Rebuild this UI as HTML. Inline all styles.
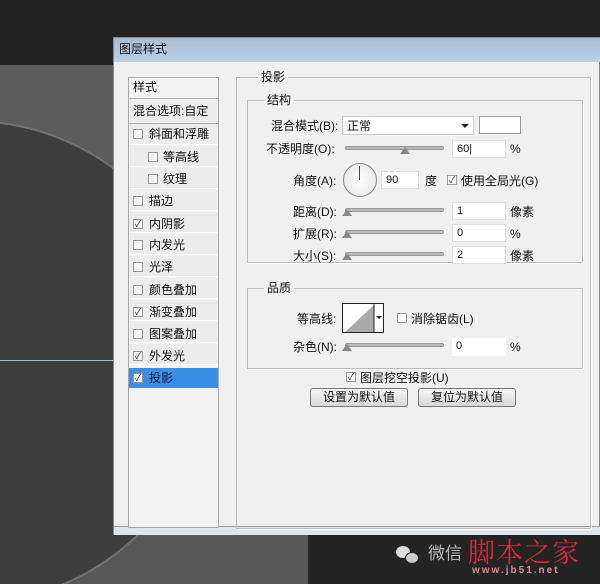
<!DOCTYPE html>
<html><head><meta charset="utf-8"><style>
*{margin:0;padding:0;box-sizing:border-box}
body{width:600px;height:584px;overflow:hidden;background:#242424;position:relative;font-family:"Liberation Sans","Noto Sans CJK SC",sans-serif;font-size:12px;color:#111}
.a{position:absolute}
.t{position:absolute;white-space:nowrap;line-height:14px}
.cb{position:absolute;width:10px;height:10px;border:1px solid #9a9a9a;background:#f4f4f4;font-size:9px;line-height:8px;text-align:center;color:#333}
.inp{position:absolute;height:18px;background:#fff;border:1px solid #ddd;padding-left:4px;line-height:16px;font-size:11px}
.sl{position:absolute;height:4px;background:#b8b8b8;border:1px solid #999;border-radius:2px}
.th{position:absolute;width:0;height:0;border-left:5px solid transparent;border-right:5px solid transparent;border-bottom:7px solid #888}
.btn{position:absolute;height:19px;border:1px solid #777;border-radius:3px;background:linear-gradient(#f6f6f6,#d8d8d8);text-align:center;line-height:17px}
.li{position:absolute;left:129px;width:89px;height:21px;border-bottom:1px solid #fff;background:#ececec}
</style></head><body>
<div class="a" style="left:0;top:65px;width:113px;height:470px;background:#5c5c5c;overflow:hidden">
 <div class="a" style="left:-272px;top:55px;width:484px;height:484px;border-radius:50%;background:#3e3e3e;border:2px solid #727272"></div>
 <div class="a" style="left:0;top:295px;width:113px;height:1px;background:#8fc3d0"></div>
</div>
<div class="a" style="left:0;top:535px;width:308px;height:49px;background:#585858;overflow:hidden">
 <div class="a" style="left:-272px;top:-415px;width:484px;height:484px;border-radius:50%;background:#3e3e3e;border:2px solid #727272"></div>
</div>
<div class="a" style="left:113px;top:37px;width:487px;height:498px;background:#f0f0f0;border:1px solid #888"></div>
<div class="a" style="left:114px;top:38px;width:486px;height:24px;background:linear-gradient(#a8bdd5,#bad0e7)"></div>
<div class="t" style="left:119px;top:42px;font-size:12px">图层样式</div>
<div class="a" style="left:114px;top:526px;width:486px;height:9px;background:#dde6ee;border-top:1px solid #999"></div>
<div class="a" style="left:128px;top:77px;width:91px;height:451px;background:#f2f2f2;border:1px solid #a8a8a8"></div>
<div class="t" style="left:133px;top:80px">样式</div>
<div class="a" style="left:129px;top:98px;width:89px;height:1px;background:#aaa"></div>
<div class="li" style="top:100px;height:23px"></div>
<div class="t" style="left:133px;top:104px">混合选项:自定</div>
<div class="a" style="left:129px;top:123px;width:89px;height:1px;background:#aaa"></div>
<div class="li" style="top:124px"></div><div class="cb" style="left:133px;top:129px"></div><div class="t" style="left:149px;top:127px">斜面和浮雕</div>
<div class="li" style="top:146px"></div><div class="cb" style="left:148px;top:152px"></div><div class="t" style="left:163px;top:150px">等高线</div>
<div class="li" style="top:168px"></div><div class="cb" style="left:148px;top:174px"></div><div class="t" style="left:163px;top:172px">纹理</div>
<div class="li" style="top:190px"></div><div class="cb" style="left:133px;top:196px"></div><div class="t" style="left:149px;top:194px">描边</div>
<div class="li" style="top:212px"></div><div class="cb" style="left:133px;top:219px">✓</div><div class="t" style="left:149px;top:217px">内阴影</div>
<div class="li" style="top:234px"></div><div class="cb" style="left:133px;top:240px"></div><div class="t" style="left:149px;top:238px">内发光</div>
<div class="li" style="top:256px"></div><div class="cb" style="left:133px;top:262px"></div><div class="t" style="left:149px;top:260px">光泽</div>
<div class="li" style="top:278px"></div><div class="cb" style="left:133px;top:285px"></div><div class="t" style="left:149px;top:283px">颜色叠加</div>
<div class="li" style="top:300px"></div><div class="cb" style="left:133px;top:307px">✓</div><div class="t" style="left:149px;top:305px">渐变叠加</div>
<div class="li" style="top:322px"></div><div class="cb" style="left:133px;top:329px"></div><div class="t" style="left:149px;top:327px">图案叠加</div>
<div class="li" style="top:344px"></div><div class="cb" style="left:133px;top:351px">✓</div><div class="t" style="left:149px;top:349px">外发光</div>
<div class="a" style="left:129px;top:368px;width:89px;height:20px;background:#3a8ee6"></div><div class="cb" style="left:133px;top:373px;background:#fff">✓</div><div class="t" style="left:149px;top:371px;color:#102040">投影</div>
<div class="a" style="left:236px;top:77px;width:355px;height:452px;border:1px solid #bbb;box-shadow:1px 1px 0 #fff"></div>
<div class="t" style="left:258px;top:70px;background:#f0f0f0;padding:0 3px">投影</div>
<div class="a" style="left:247px;top:100px;width:336px;height:163px;border:1px solid #bbb;box-shadow:1px 1px 0 #fff"></div>
<div class="t" style="left:264px;top:93px;background:#f0f0f0;padding:0 3px">结构</div>
<div class="t" style="left:271px;top:119px">混合模式(B):</div>
<div class="a" style="left:342px;top:116px;width:132px;height:19px;background:#fff;border:1px solid #ccc"></div>
<div class="t" style="left:347px;top:119px">正常</div>
<div class="a" style="left:461px;top:124px;border-left:4px solid transparent;border-right:4px solid transparent;border-top:4px solid #222"></div>
<div class="a" style="left:479px;top:116px;width:42px;height:18px;background:#fff;border:1px solid #999"></div>
<div class="t" style="left:266px;top:142px">不透明度(O):</div>
<div class="sl" style="left:345px;top:146px;width:99px"></div><div class="th" style="left:400px;top:147px"></div>
<div class="inp" style="left:452px;top:140px;width:54px">60|</div><div class="t" style="left:510px;top:142px">%</div>
<div class="t" style="left:293px;top:174px">角度(A):</div>
<div class="a" style="left:343px;top:163px;width:34px;height:34px;border-radius:50%;border:1px solid #888;background:radial-gradient(#fff,#e2e2e2)"></div>
<div class="a" style="left:359px;top:166px;width:1px;height:14px;background:#444"></div>
<div class="inp" style="left:381px;top:171px;width:38px">90</div><div class="t" style="left:425px;top:174px">度</div>
<div class="cb" style="left:447px;top:175px;background:#fff">✓</div><div class="t" style="left:461px;top:174px">使用全局光(G)</div>
<div class="t" style="left:293px;top:205px">距离(D):</div>
<div class="sl" style="left:345px;top:208px;width:99px"></div><div class="th" style="left:342px;top:209px"></div>
<div class="inp" style="left:452px;top:202px;width:54px">1</div><div class="t" style="left:510px;top:205px">像素</div>
<div class="t" style="left:293px;top:227px">扩展(R):</div>
<div class="sl" style="left:345px;top:230px;width:99px"></div><div class="th" style="left:342px;top:231px"></div>
<div class="inp" style="left:452px;top:224px;width:54px">0</div><div class="t" style="left:510px;top:227px">%</div>
<div class="t" style="left:293px;top:249px">大小(S):</div>
<div class="sl" style="left:345px;top:252px;width:99px"></div><div class="th" style="left:342px;top:253px"></div>
<div class="inp" style="left:452px;top:246px;width:54px">2</div><div class="t" style="left:510px;top:249px">像素</div>
<div class="a" style="left:247px;top:288px;width:336px;height:81px;border:1px solid #bbb;box-shadow:1px 1px 0 #fff"></div>
<div class="t" style="left:264px;top:281px;background:#f0f0f0;padding:0 3px">品质</div>
<div class="t" style="left:297px;top:312px">等高线:</div>
<div class="a" style="left:342px;top:303px;width:42px;height:30px;border:1px solid #222;background:#fff;overflow:hidden">
<svg width="42" height="30" class="a" style="left:0;top:0"><polygon points="1,29 31,1 31,29" fill="#aaa"/><line x1="31" y1="0" x2="31" y2="30" stroke="#222"/><polygon points="33,12 39,12 36,15" fill="#222"/></svg></div>
<div class="cb" style="left:397px;top:313px;background:#fff"></div><div class="t" style="left:411px;top:312px">消除锯齿(L)</div>
<div class="t" style="left:293px;top:340px">杂色(N):</div>
<div class="sl" style="left:345px;top:343px;width:99px"></div><div class="th" style="left:342px;top:344px"></div>
<div class="inp" style="left:452px;top:338px;width:54px;border:none">0</div><div class="t" style="left:510px;top:340px">%</div>
<div class="cb" style="left:346px;top:372px;background:#fff">✓</div><div class="t" style="left:360px;top:371px">图层挖空投影(U)</div>
<div class="btn" style="left:310px;top:388px;width:98px">设置为默认值</div>
<div class="btn" style="left:418px;top:388px;width:98px">复位为默认值</div>
<div class="a" style="left:396px;top:546px;width:14px;height:12px;border-radius:50%;background:#ddd"></div>
<div class="a" style="left:405px;top:552px;width:14px;height:12px;border-radius:50%;background:#ccc;border:1px solid #242424"></div>
<div class="t" style="left:428px;top:544px;font-size:17px;line-height:20px;color:#bbb">微信</div>
<div class="t" style="left:468px;top:536px;font-size:27px;line-height:30px;color:#d8283a;font-family:'Noto Serif CJK SC',serif;letter-spacing:1px">脚本之家</div>
<div class="t" style="left:472px;top:566px;font-size:10px;line-height:10px;color:#e08890;font-weight:bold;letter-spacing:2px">www.jb51.net</div>
</body></html>
